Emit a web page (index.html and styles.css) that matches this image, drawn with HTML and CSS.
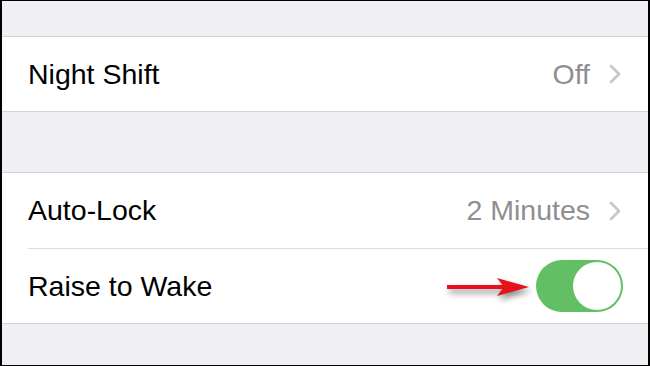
FILE: index.html
```html
<!DOCTYPE html>
<html lang="en">
  <head>
    <meta charset="UTF-8" />
    <meta name="viewport" content="width=device-width, initial-scale=1.0" />
    <title>Display &amp; Brightness</title>
    <link rel="stylesheet" href="styles.css">
  </head>

  <body>
    <div class="screen">
      <section class="group">
        <div class="row">
          <div class="cell">
            <span class="label">Night Shift</span>
            <span class="value">Off</span>
            <svg class="chevron" width="12" height="20" viewBox="0 0 12 20">
              <polyline points="2,2 10,10 2,18" />
            </svg>
          </div>
        </div>
      </section>

      <section class="group">
        <div class="row">
          <div class="cell">
            <span class="label">Auto-Lock</span>
            <span class="value">2 Minutes</span>
            <svg class="chevron" width="12" height="20" viewBox="0 0 12 20">
              <polyline points="2,2 10,10 2,18" />
            </svg>
          </div>
        </div>
        <div class="row">
          <div class="cell">
            <span class="label">Raise to Wake</span>
            <!-- annotation arrow -->
            <svg class="arrow" width="84" height="24" viewBox="0 0 84 24">
              <rect x="0" y="10" width="58" height="4" />
              <polygon points="50,3 82,12 50,21 57,12" />
            </svg>
            <div class="toggle on">
              <div class="knob"></div>
            </div>
          </div>
        </div>
      </section>
    </div>
  </body>
</html>
```

FILE: styles.css
```css
* {
  box-sizing: border-box;
}
body {
  margin: 0;
  font-family: "Liberation Sans", Arial, sans-serif;
}
.screen {
  width: 650px;
  height: 366px;
  border: 1px solid #000;
  border-left-width: 2px;
  border-right-width: 2px;
  background-color: #efeff4;
  padding-top: 35px;
  overflow: hidden;
}
.group {
  background-color: #fff;
  border-top: 1px solid #d4d3d8;
  border-bottom: 1px solid #d4d3d8;
}
.group + .group {
  margin-top: 60px;
}
.row {
  padding-left: 26px;
}
.cell {
  display: flex;
  align-items: center;
  height: 74px;
  padding-right: 27px;
}
.group + .group .row:first-child .cell {
  height: 75px;
}
.row + .row .cell {
  border-top: 1px solid #dcdbe0;
  height: 75px;
}
.label {
  flex: 1;
  font-size: 28.5px;
  color: #000;
}
.value {
  font-size: 28.5px;
  color: #8e8e93;
  margin-right: 19px;
}
.chevron polyline {
  fill: none;
  stroke: #c7c7cc;
  stroke-width: 2.8;
  stroke-linecap: round;
  stroke-linejoin: round;
}
.arrow {
  margin-right: 5px;
  margin-top: 2px;
  fill: #e5121b;
  filter: drop-shadow(2px 4px 3px rgba(0, 0, 0, 0.45));
}
.toggle {
  display: flex;
  justify-content: flex-end;
  width: 87px;
  height: 52px;
  padding: 2px;
  margin-right: -2px;
  border-radius: 26px;
  background-color: #62bf63;
}
.knob {
  width: 48px;
  height: 48px;
  border-radius: 50%;
  background-color: #fff;
}
```
